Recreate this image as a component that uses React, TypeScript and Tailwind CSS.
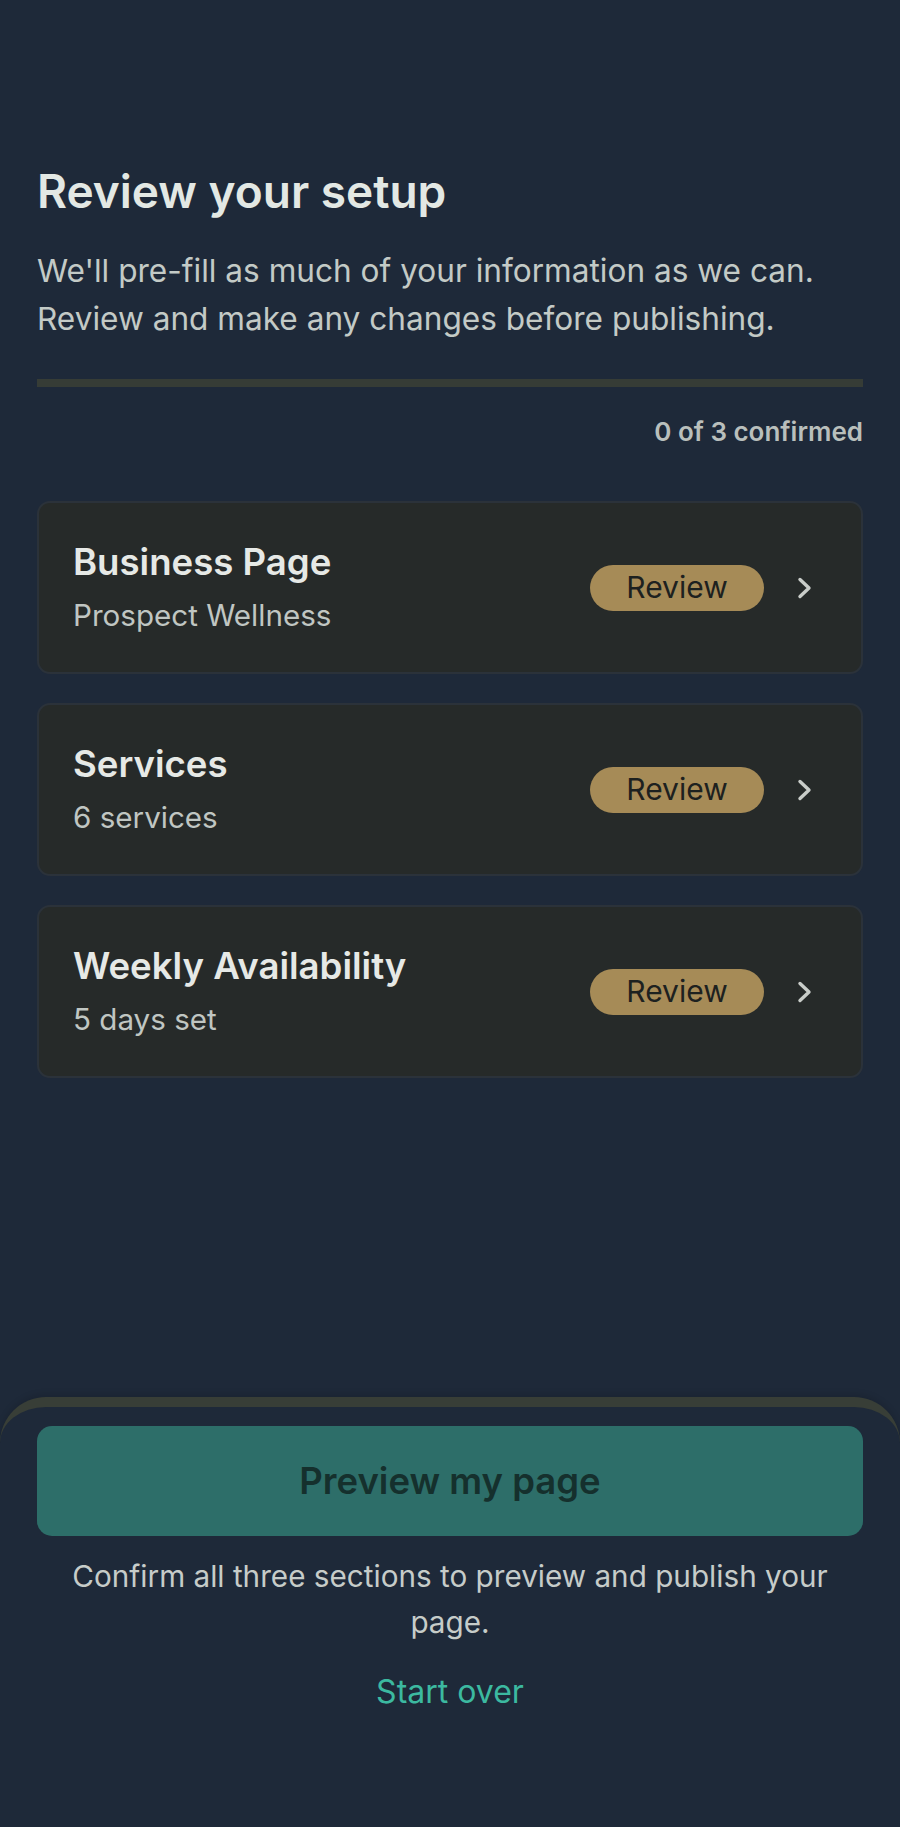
import React from 'react';

// --- DATOS ---

interface Section {
  id: string;
  title: string;
  subtitle: string;
}

const sections: Section[] = [
  { id: 'business', title: 'Business Page', subtitle: 'Prospect Wellness' },
  { id: 'services', title: 'Services', subtitle: '6 services' },
  { id: 'availability', title: 'Weekly Availability', subtitle: '5 days set' },
];

// --- COMPONENTES ---

const Chevron: React.FC = () => (
  <svg width="16" height="24" viewBox="0 0 16 24" fill="none" className="shrink-0">
    <path
      d="M3 3.5 L12 12 L3 20.5"
      stroke="#c9cdc9"
      strokeWidth="3.4"
      strokeLinecap="round"
      strokeLinejoin="round"
    />
  </svg>
);

const SectionCard: React.FC<{ section: Section }> = ({ section }) => (
  <button className="flex h-[173px] w-full items-center rounded-[13px] border-2 border-[#2b323a] bg-[#262a29] pl-[34px] pr-[48px] text-left">
    <div className="flex flex-1 flex-col gap-[11px]">
      <span className="text-[36.6px] font-semibold leading-[1.2] text-[#e6e9e6]">{section.title}</span>
      <span className="text-[29.6px] leading-[1.3] text-[#c0c6c2]">{section.subtitle}</span>
    </div>
    <span className="flex h-[46px] w-[174px] items-center justify-center rounded-full bg-[#a68b57] text-[30px] text-[#1d211f]">
      Review
    </span>
    <span className="ml-[33px]">
      <Chevron />
    </span>
  </button>
);

export default function App() {
  return (
    <div
      className="flex min-h-[1827px] w-full flex-col bg-[#1e2939]"
      style={{ fontFamily: 'Inter, "Noto Sans", sans-serif' }}
    >
      <div className="px-[37px] pt-[164px]">
        <h1 className="text-[46px] font-semibold leading-[1.2] text-[#e3e8e4]">Review your setup</h1>
        <p className="mt-[28px] text-[31.6px] leading-[48px] text-[#c3cac6]">
          We'll pre-fill as much of your information as we can.
          <br />
          Review and make any changes before publishing.
        </p>

        <div className="mt-[36px] h-[8px] w-full bg-[#363c36]" />
        <p className="mt-[27px] text-right text-[26px] font-semibold leading-[36px] text-[#b9bfbc]">
          0 of 3 confirmed
        </p>

        <div className="mt-[51px] flex flex-col gap-[29px]">
          {sections.map((s) => (
            <SectionCard key={s.id} section={s} />
          ))}
        </div>
      </div>

      <div className="mt-auto h-[430px] rounded-t-[46px] border-t-[10px] border-[#383e37] bg-[#1e2939] px-[37px] pt-[19px] shadow-[0_-3px_6px_rgba(0,0,0,0.12)]">
        <button className="flex h-[110px] w-full items-center justify-center rounded-[15px] bg-[#2d6e69] text-[36.5px] font-semibold text-[#15302d]">
          Preview my page
        </button>
        <p className="mt-[17px] px-2 text-center text-[29.7px] leading-[46px] text-[#c6ccc9]">
          Confirm all three sections to preview and publish your page.
        </p>
        <p className="mt-[24px] text-center text-[32px] leading-[46px] text-[#3cb9a0]">Start over</p>
      </div>
    </div>
  );
}
